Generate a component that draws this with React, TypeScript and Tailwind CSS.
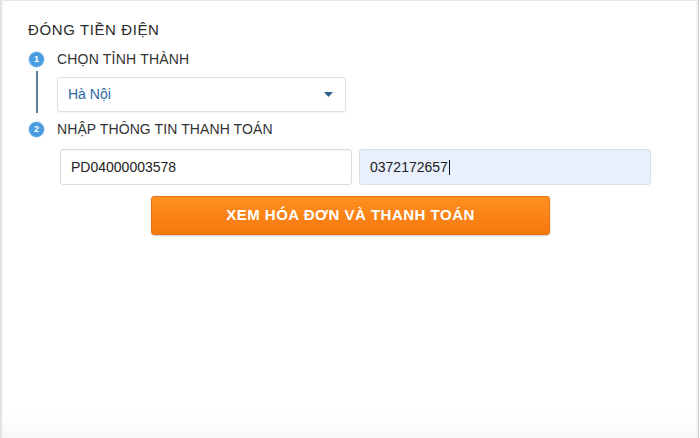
import React from "react";

function StepDot({ n }: { n: number }) {
  return (
    <div className="w-[15px] h-[15px] rounded-full bg-[#4a9be0] shadow-[0_0_0_1px_#d5e7f7] flex items-center justify-center text-white text-[9px] font-bold leading-none">
      {n}
    </div>
  );
}

export default function App() {
  return (
    <div
      className="w-[700px] h-[438px] bg-white overflow-hidden"
      style={{ fontFamily: '"Liberation Sans", Arial, sans-serif' }}
    >
      <div className="h-full flex border-t border-[#e6e6e6]">
        <div className="w-[3px] bg-gradient-to-r from-[#dcdcdc] to-[#f7f7f7]" />
        <div className="flex-1 flex flex-col bg-gradient-to-b from-white from-[94%] to-[#f8f8f8]">
          <div className="pl-[25px] pt-[20px] text-[15px] leading-[18px] text-[#2b2b2b] tracking-[0.6px]">
            ĐÓNG TIỀN ĐIỆN
          </div>
          <div className="flex pl-[26px] mt-[13px]">
            <div className="w-[15px] flex flex-col items-center">
              <StepDot n={1} />
              <div className="w-[2px] h-[42px] mt-[4px] bg-[#5f7f98]" />
            </div>
            <div className="flex flex-col pl-[13px]">
              <div className="text-[14px] text-[#333] leading-[15px] tracking-[0.2px]">CHỌN TỈNH THÀNH</div>
              <div className="mt-[10px] w-[289px] h-[35px] border border-[#dedede] rounded-[3px] flex items-center justify-between pl-[10px] pr-[12px] shadow-[0_1px_2px_rgba(0,0,0,0.05)]">
                <span className="text-[14px] text-[#2a6aa3]">Hà Nội</span>
                <svg width="9" height="5" viewBox="0 0 9 5">
                  <path d="M0 0 L9 0 L4.5 5 Z" fill="#2d5f8c" />
                </svg>
              </div>
            </div>
          </div>
          <div className="flex items-center pl-[26px] mt-[9px]">
            <StepDot n={2} />
            <div className="pl-[13px] text-[14px] text-[#333] leading-[15px] tracking-[0.1px]">
              NHẬP THÔNG TIN THANH TOÁN
            </div>
          </div>
          <div className="flex gap-[7px] pl-[57px] mt-[12px]">
            <div className="w-[292px] h-[36px] border border-[#dcdcdc] rounded-[3px] flex items-center pl-[10px] text-[14px] text-[#222] shadow-[inset_0_1px_1px_rgba(0,0,0,0.04)]">
              PD04000003578
            </div>
            <div className="w-[292px] h-[36px] border border-[#d9dfe8] rounded-[3px] bg-[#e9f0fd] flex items-center pl-[10px] text-[14px] text-[#222]">
              0372172657
              <span className="inline-block w-px h-[15px] bg-[#111] ml-px" />
            </div>
          </div>
          <div className="flex pl-[148px] mt-[11px]">
            <div className="w-[399px] h-[39px] rounded-[3px] bg-gradient-to-b from-[#ff8f1f] to-[#f5780f] border border-[#e97012] shadow-[0_1px_2px_rgba(0,0,0,0.2)] flex items-center justify-center text-white font-bold text-[15px] tracking-[0.5px]">
              XEM HÓA ĐƠN VÀ THANH TOÁN
            </div>
          </div>
        </div>
        <div className="w-[4px] flex">
          <div className="w-[2px] bg-[#f3f3f3]" />
          <div className="w-px bg-[#cfcfcf]" />
          <div className="w-px bg-white" />
        </div>
      </div>
    </div>
  );
}
